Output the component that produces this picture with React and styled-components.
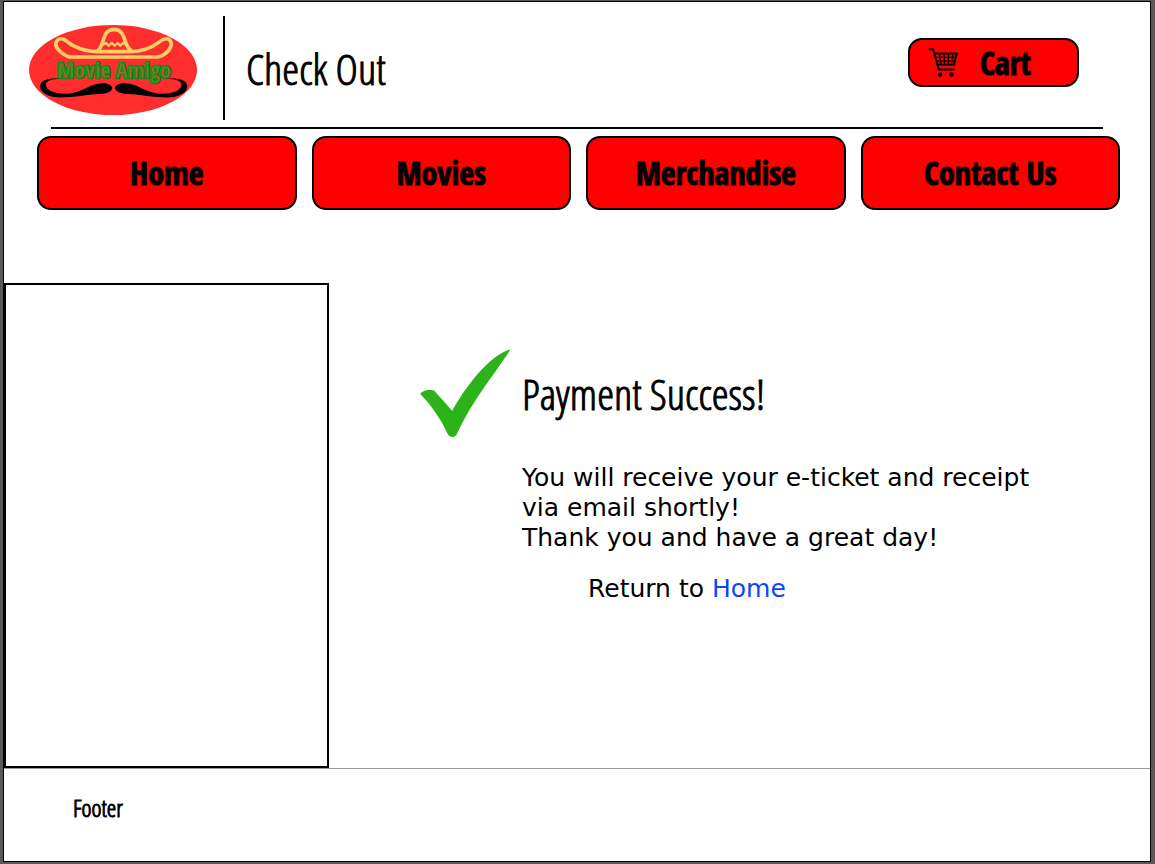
import React from "react";
import styled, { createGlobalStyle } from "styled-components";

const GlobalStyle = createGlobalStyle`
  *, *::before, *::after { box-sizing: border-box; }
  body {
    margin: 0;
    background: #5a5858;
    color: #000;
    font-family: "DejaVu Sans", Verdana, sans-serif;
  }
`;

const Frame = styled.div`
  display: flex;
  min-height: 100vh;
  padding: 1px 4px 2px 3px;
`;

const Page = styled.div`
  display: flex;
  flex: 1;
  flex-direction: column;
  background: #fff;
  border: 1px solid #000;
`;

const Header = styled.header`
  display: flex;
  align-items: center;
  padding: 14px 71px 7px 25px;
`;

const Logo = styled.svg`
  display: block;
  width: 168px;
  height: 90px;
  margin-top: 4px;
`;

const LogoText = styled.text`
  font-family: "Open Sans Condensed", "Open Sans", sans-serif;
  font-size: 66px;
  font-weight: 700;
  stroke-linejoin: round;
  fill: ${(p) => p.$fill};
  stroke: ${(p) => p.$stroke};
  stroke-width: ${(p) => p.$width}px;
`;

const Divider = styled.div`
  width: 2px;
  height: 104px;
  margin: 0 21px 0 26px;
  background: #000;
`;

const Title = styled.h1`
  margin: 0;
  font-family: "Open Sans Condensed Light", "Open Sans", sans-serif;
  font-size: ${(p) => p.$size}px;
  font-weight: 300;
  line-height: 1;
  -webkit-text-stroke: 1px #000;
`;

const RedButton = styled.button`
  display: flex;
  align-items: center;
  justify-content: center;
  border: 2px solid #000;
  border-radius: 14px;
  background: #f00;
  color: #000;
  font-family: "Open Sans Condensed", "Open Sans", sans-serif;
  font-size: 32px;
  font-weight: 700;
  line-height: 1;
  -webkit-text-stroke: 1px #000;
  cursor: pointer;
`;

const CartButton = styled(RedButton)`
  align-self: flex-start;
  justify-content: flex-start;
  gap: 22px;
  width: 171px;
  height: 49px;
  margin: 22px 0 0 auto;
  padding: 0 0 0 18px;
`;

const CartIcon = styled.svg`
  width: 30px;
  height: 30px;
`;

const Rule = styled.hr`
  height: 2px;
  margin: 0 47px;
  border: 0;
  background: #000;
`;

const Nav = styled.nav`
  display: flex;
  gap: 15px;
  padding: 7px 30px 0 33px;
`;

const NavButton = styled(RedButton)`
  flex: 1 1 0;
  height: 74px;
  padding: 0;
`;

const Main = styled.main`
  display: flex;
  flex: 1;
  margin-top: 73px;
`;

const Sidebar = styled.aside`
  flex: none;
  width: 325px;
  border: 2px solid #000;
`;

const Result = styled.section`
  display: grid;
  grid-template-columns: 91px auto;
  column-gap: 11px;
  align-content: start;
  align-items: center;
  padding: 66px 20px 40px 91px;
`;

const Check = styled.svg`
  width: 91px;
  height: 89px;
`;

const Message = styled.div`
  grid-column: 2;
  margin-top: 25px;
  font-size: 25px;
  line-height: 30px;
`;

const Line = styled.p`
  margin: 0;
`;

const Return = styled.p`
  margin: 21px 0 0;
  padding-left: 66px;
`;

const HomeLink = styled.a`
  color: #0a46ff;
  text-decoration: none;
`;

const Footer = styled.footer`
  height: 93px;
  padding: 27px 69px;
  border-top: 1px solid #999;
`;

const moustache =
  "M118 191 C92 188 62 193 60 213 C60 236 92 250 135 247 C180 245 215 236 246 236 C266 235 276 228 277 219 C274 206 256 202 234 206 C200 213 176 236 136 236 C102 236 76 226 78 207 C80 196 98 192 118 191 Z";

function MovieAmigoLogo() {
  return (
    <Logo viewBox="27 30 504 270" role="img" aria-label="Movie Amigo">
      <ellipse cx="279" cy="165" rx="252" ry="135" fill="#ff2d2d" />
      <g fill="none" stroke="#f8cf66" strokeWidth="11" strokeLinejoin="round" strokeLinecap="round">
        <path d="M148 126 C120 116 98 92 112 76 C126 62 142 82 160 92 C186 106 210 110 236 110 L330 110 C366 109 398 96 416 82 C436 66 452 68 454 88 C450 108 430 124 414 126 Z" />
        <path d="M234 106 C256 88 244 44 282 43 C320 44 308 88 332 106" />
        <path d="M250 88 L258 84 L266 92 L275 84 L284 92 L293 84 L301 92 L309 84 L316 88" strokeWidth="7" />
      </g>
      <LogoText x="281" y="190" textAnchor="middle" $fill="#14701a" $stroke="#14701a" $width={8} aria-hidden="true">
        Movie Amigo
      </LogoText>
      <LogoText x="281" y="190" textAnchor="middle" $fill="#b8562c" $stroke="#1d941d" $width={4}>
        Movie Amigo
      </LogoText>
      <path d={moustache} />
      <path d={moustache} transform="matrix(-1 0 0 1 562 0)" />
    </Logo>
  );
}

function Cart() {
  return (
    <CartIcon viewBox="20 28 92 90" aria-hidden="true">
      <g fill="none" stroke="#000" strokeWidth="6" strokeLinejoin="round" strokeLinecap="round">
        <path d="M24 31 H36 L53 93 H99" />
        <path d="M40 44 H108 L100 78 H49" />
        <path d="M44 56 H105 M47 67 H102 M55 44 L60 78 M69 44 L71 78 M83 44 L82 78 M96 44 L92 78" strokeWidth="4" />
      </g>
      <circle cx="57" cy="108" r="7" />
      <circle cx="92" cy="108" r="7" />
    </CartIcon>
  );
}

const sections = ["Home", "Movies", "Merchandise", "Contact Us"];

export default function App() {
  return (
    <Frame>
      <GlobalStyle />
      <Page>
        <Header>
          <MovieAmigoLogo />
          <Divider />
          <Title $size={43}>Check Out</Title>
          <CartButton type="button">
            <Cart />
            Cart
          </CartButton>
        </Header>
        <Rule />
        <Nav>
          {sections.map((name) => (
            <NavButton type="button" key={name}>
              {name}
            </NavButton>
          ))}
        </Nav>
        <Main>
          <Sidebar />
          <Result>
            <Check viewBox="30 27 274 266" aria-hidden="true">
              <path
                fill="#2db31a"
                d="M30 161 C42 150 60 145 73 152 L127 212 C165 145 235 45 303 27 C250 110 195 170 142 280 C136 295 120 295 112 280 C95 240 60 190 30 161 Z"
              />
            </Check>
            <Title as="h2" $size={43}>Payment Success!</Title>
            <Message>
              <Line>You will receive your e-ticket and receipt</Line>
              <Line>via email shortly!</Line>
              <Line>Thank you and have a great day!</Line>
              <Return>
                Return to <HomeLink href="#home">Home</HomeLink>
              </Return>
            </Message>
          </Result>
        </Main>
        <Footer>
          <Title as="p" $size={24}>Footer</Title>
        </Footer>
      </Page>
    </Frame>
  );
}
